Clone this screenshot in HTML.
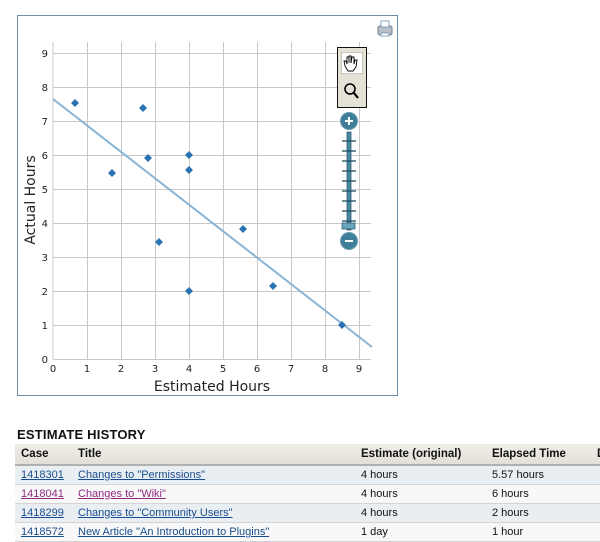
<!DOCTYPE html>
<html><head><style>
body{margin:0;background:#fff;width:600px;height:541px;overflow:hidden;position:relative;font-family:"DejaVu Sans",Verdana,sans-serif;}
h3{position:absolute;left:17px;top:427px;margin:0;font:bold 13px "Liberation Sans",Arial,sans-serif;letter-spacing:0.2px;color:#111;}
table{position:absolute;left:15px;top:444px;border-collapse:collapse;font:11px "Liberation Sans",Arial,sans-serif;white-space:nowrap;table-layout:fixed;width:640px}
th{text-align:left;font-weight:bold;height:20px;padding:0 6px;background:linear-gradient(#f0eee8,#e2dfd6);border-bottom:2px solid #b0b0b0;color:#111;overflow:hidden;font-size:11.5px}
td{height:18px;padding:0 6px;border-bottom:1px solid #d4d4d4;color:#111;overflow:hidden}
tr.a td{background:#e9eef3}
tr.b td{background:#f8f8f8}
a{color:#1a4d8f;text-decoration:underline}
a.v{color:#8e2a84}
</style></head><body>
<svg width="600" height="400" style="position:absolute;left:0;top:0" font-family="DejaVu Sans,sans-serif">
<rect x="17.5" y="15.5" width="380" height="380" fill="#fff" stroke="#6b8fa6"/>
<g stroke="#c8c8c8" stroke-width="1">
<line x1="53" y1="42" x2="53" y2="359"/><line x1="87.5" y1="42" x2="87.5" y2="359"/><line x1="121.5" y1="42" x2="121.5" y2="359"/><line x1="155.5" y1="42" x2="155.5" y2="359"/><line x1="189.5" y1="42" x2="189.5" y2="359"/><line x1="223.5" y1="42" x2="223.5" y2="359"/><line x1="257.5" y1="42" x2="257.5" y2="359"/><line x1="291.5" y1="42" x2="291.5" y2="359"/><line x1="325.5" y1="42" x2="325.5" y2="359"/><line x1="359.5" y1="42" x2="359.5" y2="359"/>
<line x1="53" y1="359.5" x2="371" y2="359.5"/><line x1="53" y1="325.5" x2="371" y2="325.5"/><line x1="53" y1="291.5" x2="371" y2="291.5"/><line x1="53" y1="257.5" x2="371" y2="257.5"/><line x1="53" y1="223.5" x2="371" y2="223.5"/><line x1="53" y1="189.5" x2="371" y2="189.5"/><line x1="53" y1="155.5" x2="371" y2="155.5"/><line x1="53" y1="121.5" x2="371" y2="121.5"/><line x1="53" y1="87.5" x2="371" y2="87.5"/><line x1="53" y1="53.5" x2="371" y2="53.5"/>
</g>
<g font-size="10" fill="#222" text-anchor="end">
<text x="48" y="363">0</text><text x="48" y="329">1</text><text x="48" y="295">2</text><text x="48" y="261">3</text><text x="48" y="227">4</text><text x="48" y="193">5</text><text x="48" y="159">6</text><text x="48" y="125">7</text><text x="48" y="91">8</text><text x="48" y="57">9</text>
</g>
<g font-size="10" fill="#222" text-anchor="middle">
<text x="53" y="372">0</text><text x="87" y="372">1</text><text x="121" y="372">2</text><text x="155" y="372">3</text><text x="189" y="372">4</text><text x="223" y="372">5</text><text x="257" y="372">6</text><text x="291" y="372">7</text><text x="325" y="372">8</text><text x="359" y="372">9</text>
</g>
<text x="212" y="391" font-size="14" fill="#222" text-anchor="middle">Estimated Hours</text>
<text transform="translate(35,200) rotate(-90)" font-size="14" fill="#222" text-anchor="middle">Actual Hours</text>
<line x1="53" y1="99" x2="372" y2="347" stroke="#88b4d6" stroke-width="2"/>
<g fill="#2b72b3">
<path d="M75 99l4 4-4 4-4-4z"/><path d="M143 104l4 4-4 4-4-4z"/><path d="M112 169l4 4-4 4-4-4z"/><path d="M148 154l4 4-4 4-4-4z"/><path d="M189 151l4 4-4 4-4-4z"/><path d="M189 166l4 4-4 4-4-4z"/><path d="M159 238l4 4-4 4-4-4z"/><path d="M243 225l4 4-4 4-4-4z"/><path d="M189 287l4 4-4 4-4-4z"/><path d="M273 282l4 4-4 4-4-4z"/><path d="M342 321l4 4-4 4-4-4z"/>
</g>
<rect x="337.5" y="47.5" width="29" height="60" fill="#e4e2d4" stroke="#111"/>
<rect x="341.5" y="52.5" width="21" height="21" fill="#fff" stroke="#999" stroke-width="0.5"/>
<path d="M345 66 l-1-5 2 0 1 3 0-7 2 0 0 6 0-7 2 0 0 7 1-6 2 0 0 7 1-4 2 0 -1 7 -3 4 -5 0z" fill="none" stroke="#000" stroke-width="0.9"/>
<circle cx="350" cy="89" r="5" fill="none" stroke="#000" stroke-width="1.6"/>
<line x1="354" y1="93" x2="358" y2="98" stroke="#000" stroke-width="2.2"/>
<rect x="347" y="132" width="4" height="98" fill="#4a8aa2" stroke="#1f4e66" stroke-width="0.7"/>
<g stroke="#1f4e66" stroke-width="1.3">
<line x1="342" y1="141" x2="356" y2="141"/><line x1="342" y1="151" x2="356" y2="151"/><line x1="342" y1="161" x2="356" y2="161"/><line x1="342" y1="171" x2="356" y2="171"/><line x1="342" y1="181" x2="356" y2="181"/><line x1="342" y1="191" x2="356" y2="191"/><line x1="342" y1="201" x2="356" y2="201"/><line x1="342" y1="211" x2="356" y2="211"/><line x1="342" y1="221" x2="356" y2="221"/>
</g>
<rect x="342" y="223" width="13" height="6" fill="#6aa7bf" stroke="#1f4e66" stroke-width="0.7"/>
<circle cx="349" cy="121" r="8.5" fill="#3f7f99" stroke="#6a9ab0"/>
<path d="M345 121h8M349 117v8" stroke="#fff" stroke-width="2"/>
<circle cx="349" cy="241" r="8.5" fill="#3f7f99" stroke="#6a9ab0"/>
<path d="M345 241h8" stroke="#fff" stroke-width="2"/>
<rect x="378" y="26" width="14" height="9" rx="2" fill="#b8c0c8" stroke="#6b7b8a"/>
<rect x="381" y="21" width="8" height="6" fill="#fff" stroke="#6b8fb0" stroke-width="0.8"/>
<rect x="381" y="33" width="8" height="3" fill="#fff" stroke="#6b8fb0" stroke-width="0.8"/>
</svg>
<h3>ESTIMATE HISTORY</h3>
<table>
<colgroup><col style="width:57px"><col style="width:283px"><col style="width:131px"><col style="width:105px"><col style="width:64px"></colgroup>
<tr><th>Case</th><th>Title</th><th>Estimate (original)</th><th>Elapsed Time</th><th>Di</th></tr>
<tr class="a"><td><a href="#">1418301</a></td><td><a href="#">Changes to "Permissions"</a></td><td>4 hours</td><td>5.57 hours</td><td></td></tr>
<tr class="b"><td><a class="v" href="#">1418041</a></td><td><a class="v" href="#">Changes to "Wiki"</a></td><td>4 hours</td><td>6 hours</td><td></td></tr>
<tr class="a"><td><a href="#">1418299</a></td><td><a href="#">Changes to "Community Users"</a></td><td>4 hours</td><td>2 hours</td><td></td></tr>
<tr class="b"><td><a href="#">1418572</a></td><td><a href="#">New Article "An Introduction to Plugins"</a></td><td>1 day</td><td>1 hour</td><td></td></tr>
</table>
</body></html>
